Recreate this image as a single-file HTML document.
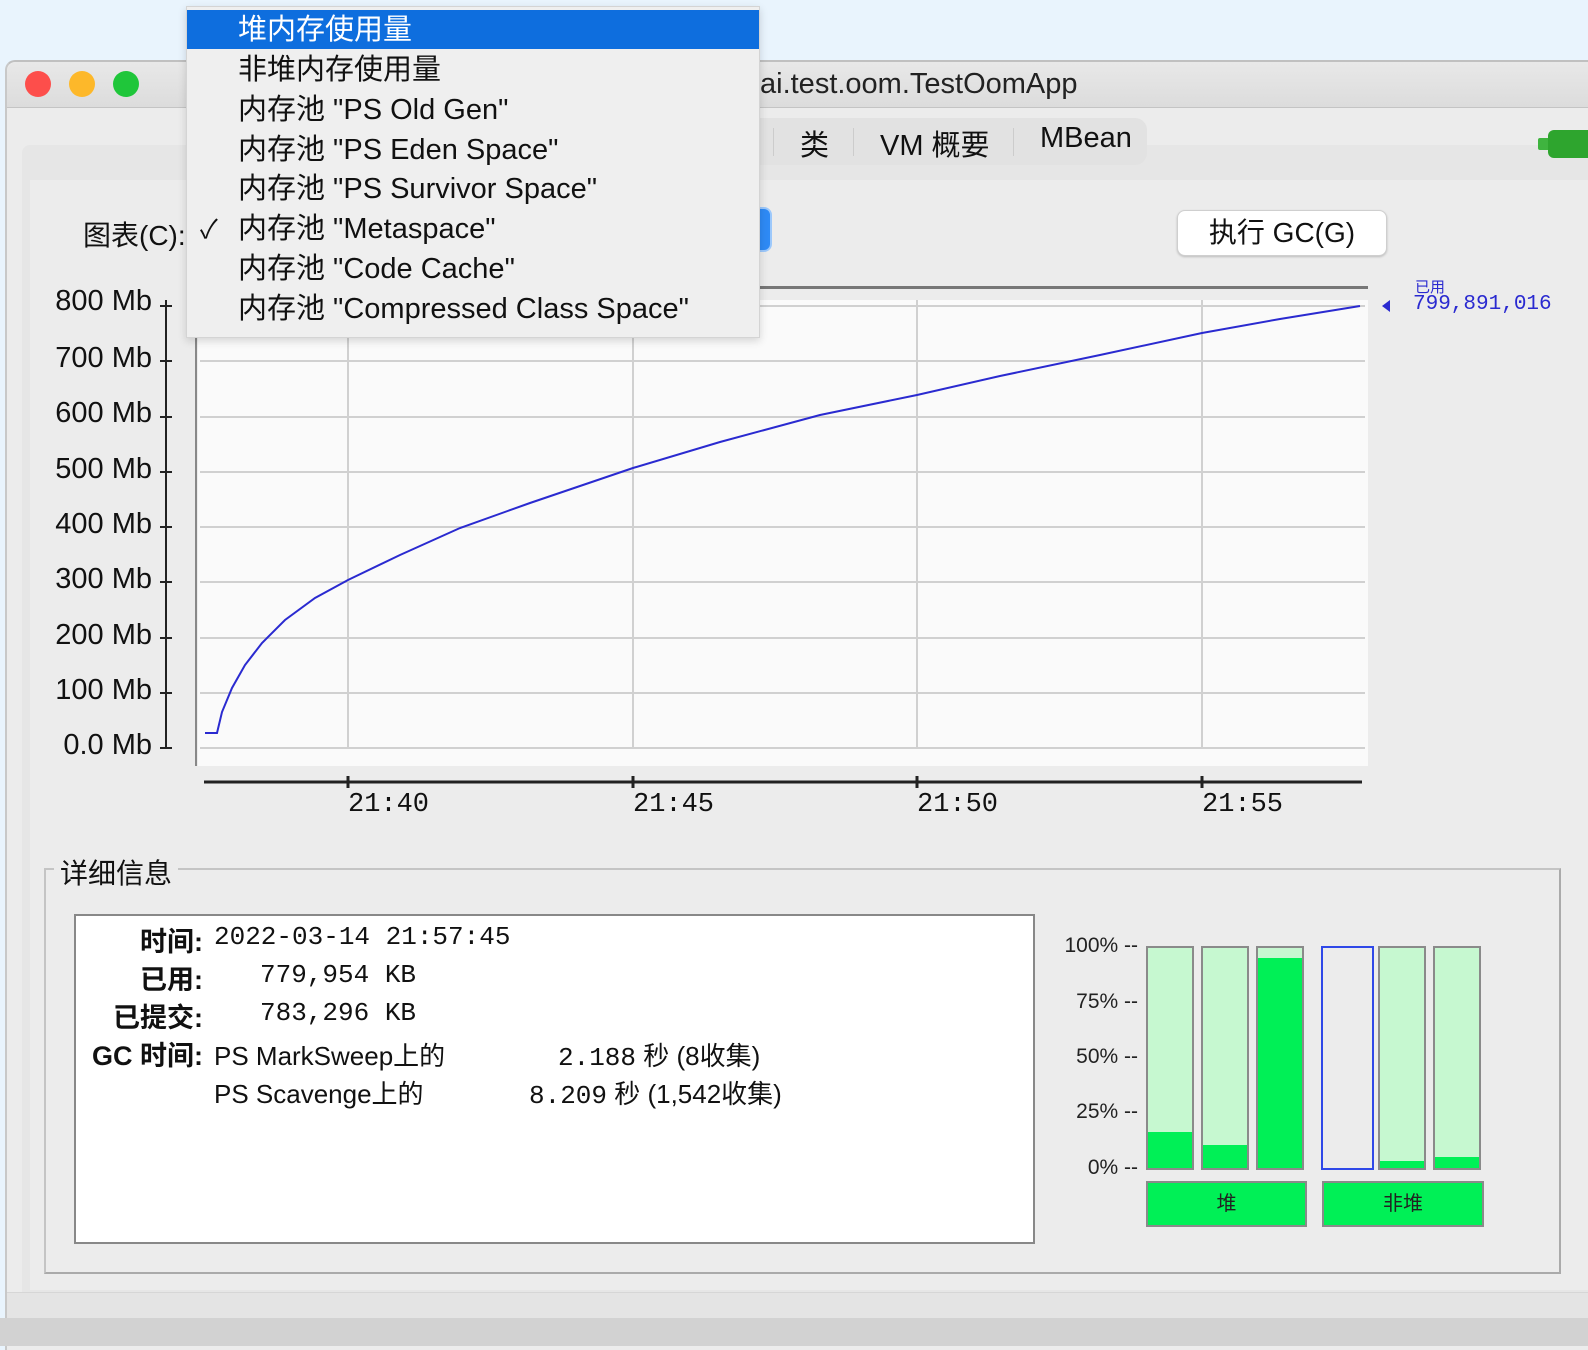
<!DOCTYPE html>
<html><head><meta charset="utf-8"><style>
*{margin:0;padding:0;box-sizing:border-box}
body{width:1588px;height:1346px;position:relative;overflow:hidden;background:#e9f4fd;font-family:"Liberation Sans","Noto Sans CJK SC",sans-serif;color:#111}
.a{position:absolute;white-space:nowrap}
.m{font-size:29px;line-height:40px;left:238px}
.yl{font-size:29px;right:1436px;text-align:right}
.xl{font-size:27px;font-family:"Liberation Mono","Noto Sans CJK SC",monospace}
.dl{font-size:27px;font-weight:bold;text-align:right;right:1385px}
.dv{font-size:26px}
.bar{position:absolute;top:946px;height:224px;width:48px;border:2px solid #8a8a8a;background:#c6f8d0}
.bar i{position:absolute;left:0;right:0;bottom:0;background:#00f056}
.pl{font-size:21px;text-align:right;right:450px;font-family:"Liberation Sans",sans-serif;color:#222}
</style></head><body>
<div class="a" style="left:5px;top:60px;width:1583px;height:1290px;background:#ececec;border-left:2px solid #c8c8c8;border-top:2px solid #c0c0c0;border-radius:10px 0 0 0"></div>
<div class="a" style="left:7px;top:62px;width:1581px;height:46px;background:linear-gradient(#e8e8e8,#dcdcdc);border-bottom:1px solid #c4c4c4;border-radius:10px 0 0 0"></div>
<div class="a" style="left:25px;top:71px;width:26px;height:26px;border-radius:50%;background:#fd4e4b"></div>
<div class="a" style="left:69px;top:71px;width:26px;height:26px;border-radius:50%;background:#fdb82a"></div>
<div class="a" style="left:113px;top:71px;width:26px;height:26px;border-radius:50%;background:#1fc63a"></div>
<div class="a" style="left:497px;top:68px;font-size:29px;color:#d8d8d8">pid: 67341 tech.pd</div>
<div class="a" style="left:760px;top:68px;font-size:29px;color:#222">ai.test.oom.TestOomApp</div>
<div class="a" style="left:22px;top:145px;width:1566px;height:1150px;background:#e6e6e6;border-radius:8px 0 0 0"></div>
<div class="a" style="left:30px;top:180px;width:1558px;height:1110px;background:#ececec"></div>
<div class="a" style="left:400px;top:118px;width:747px;height:47px;background:#e2e2e2;border-radius:12px"></div>
<div class="a" style="left:693px;top:122px;font-size:29px;color:#ccc">线程</div>
<div class="a" style="left:773px;top:128px;width:1px;height:28px;background:#ccc"></div>
<div class="a" style="left:800px;top:122px;font-size:29px">类</div>
<div class="a" style="left:853px;top:128px;width:1px;height:28px;background:#ccc"></div>
<div class="a" style="left:880px;top:122px;font-size:29px">VM 概要</div>
<div class="a" style="left:1013px;top:128px;width:1px;height:28px;background:#ccc"></div>
<div class="a" style="left:1040px;top:122px;font-size:29px">MBean</div>
<div class="a" style="left:1538px;top:138px;width:12px;height:12px;background:#3fb43f;border-radius:2px"></div>
<div class="a" style="left:1548px;top:130px;width:40px;height:28px;background:#2ea52e;border-radius:6px 0 0 6px"></div>
<div class="a" style="left:83px;top:214px;font-size:28px">图表(C):</div>
<div class="a" style="left:740px;top:207px;width:32px;height:45px;border-radius:8px;background:#2e8af5;border:2px solid #9cc8fb"></div>
<div class="a" style="left:1177px;top:210px;width:210px;height:46px;background:#fff;border:1px solid #cfcfcf;border-radius:8px;box-shadow:0 1px 2px #bbb;font-size:28px;text-align:center;line-height:44px">执行 GC(G)</div>
<div class="a" style="left:760px;top:286px;width:608px;height:3px;background:#777"></div>
<div class="a" style="left:198px;top:300px;width:1170px;height:466px;background:#fafafa"></div>
<svg class="a" style="left:0;top:0" width="1588" height="800">
<g stroke="#d0d0d0" stroke-width="2">
<line x1="200" y1="306" x2="1365" y2="306"/><line x1="200" y1="361" x2="1365" y2="361"/><line x1="200" y1="417" x2="1365" y2="417"/><line x1="200" y1="472" x2="1365" y2="472"/><line x1="200" y1="527" x2="1365" y2="527"/><line x1="200" y1="582" x2="1365" y2="582"/><line x1="200" y1="638" x2="1365" y2="638"/><line x1="200" y1="693" x2="1365" y2="693"/><line x1="200" y1="748" x2="1365" y2="748"/>
<line x1="348" y1="300" x2="348" y2="748"/><line x1="633" y1="300" x2="633" y2="748"/><line x1="917" y1="300" x2="917" y2="748"/><line x1="1202" y1="300" x2="1202" y2="748"/>
</g>
<line x1="196" y1="300" x2="196" y2="766" stroke="#888" stroke-width="2"/>
<g stroke="#222" stroke-width="2"><line x1="166" y1="300" x2="166" y2="748"/>
<line x1="160" y1="306" x2="172" y2="306"/><line x1="160" y1="361" x2="172" y2="361"/><line x1="160" y1="417" x2="172" y2="417"/><line x1="160" y1="472" x2="172" y2="472"/><line x1="160" y1="527" x2="172" y2="527"/><line x1="160" y1="582" x2="172" y2="582"/><line x1="160" y1="638" x2="172" y2="638"/><line x1="160" y1="693" x2="172" y2="693"/><line x1="160" y1="748" x2="172" y2="748"/></g>
<g stroke="#222" stroke-width="3"><line x1="204" y1="782" x2="1362" y2="782"/>
<line x1="348" y1="776" x2="348" y2="788"/><line x1="633" y1="776" x2="633" y2="788"/><line x1="917" y1="776" x2="917" y2="788"/><line x1="1202" y1="776" x2="1202" y2="788"/></g>
<path d="M205 733 L217 733 L222 712 L232 688 L245 665 L262 643 L285 620 L315 598 L348 580 L400 555 L460 528 L530 503 L633 468 L720 442 L820 415 L917 395 L1000 376 L1100 355 L1202 333 L1280 319 L1360 306" fill="none" stroke="#2a2ad0" stroke-width="2"/>
<path d="M1390 300 L1382 306 L1390 312Z" fill="#2a2ad0"/>
</svg>
<div class="a" style="left:1415px;top:276px;font-size:15px;color:#2a2ad0">已用</div>
<div class="a" style="left:1413px;top:293px;font-size:21px;color:#2a2ad0;font-family:'Liberation Mono',monospace">799,891,016</div>
<div class="a yl" style="top:285px">800 Mb</div>
<div class="a yl" style="top:342px">700 Mb</div>
<div class="a yl" style="top:397px">600 Mb</div>
<div class="a yl" style="top:453px">500 Mb</div>
<div class="a yl" style="top:508px">400 Mb</div>
<div class="a yl" style="top:563px">300 Mb</div>
<div class="a yl" style="top:619px">200 Mb</div>
<div class="a yl" style="top:674px">100 Mb</div>
<div class="a yl" style="top:729px">0.0 Mb</div>
<div class="a xl" style="left:348px;top:790px">21:40</div>
<div class="a xl" style="left:633px;top:790px">21:45</div>
<div class="a xl" style="left:917px;top:790px">21:50</div>
<div class="a xl" style="left:1202px;top:790px">21:55</div>
<div class="a" style="left:44px;top:868px;width:1517px;height:406px;border:2px solid #c4c4c4;border-right-color:#aaa;border-bottom-color:#aaa"></div>
<div class="a" style="left:54px;top:852px;font-size:28px;background:#ececec;padding:0 6px">详细信息</div>
<div class="a" style="left:74px;top:914px;width:961px;height:330px;background:#fff;border:2px solid #888"></div>
<div class="a dl" style="top:920px">时间:</div>
<div class="a dl" style="top:958px">已用:</div>
<div class="a dl" style="top:996px">已提交:</div>
<div class="a dl" style="top:1034px">GC 时间:</div>
<div class="a dv" style="left:214px;top:922px;font-family:'Liberation Mono',monospace">2022-03-14 21:57:45</div>
<div class="a dv" style="left:260px;top:960px;font-family:'Liberation Mono',monospace">779,954 KB</div>
<div class="a dv" style="left:260px;top:998px;font-family:'Liberation Mono',monospace">783,296 KB</div>
<div class="a dv" style="left:214px;top:1036px">PS MarkSweep上的</div>
<div class="a dv" style="left:214px;top:1074px">PS Scavenge上的</div>
<div class="a dv" style="left:558px;top:1036px"><span style="font-family:'Liberation Mono',monospace">2.188</span> 秒 (8收集)</div>
<div class="a dv" style="left:529px;top:1074px"><span style="font-family:'Liberation Mono',monospace">8.209</span> 秒 (1,542收集)</div>
<div class="a pl" style="top:934px">100% --</div>
<div class="a pl" style="top:990px">75% --</div>
<div class="a pl" style="top:1045px">50% --</div>
<div class="a pl" style="top:1100px">25% --</div>
<div class="a pl" style="top:1156px">0% --</div>
<div class="bar" style="left:1146px"><i style="height:36px"></i></div>
<div class="bar" style="left:1201px"><i style="height:23px"></i></div>
<div class="bar" style="left:1256px"><i style="height:210px"></i></div>
<div class="bar" style="left:1321px;width:53px;background:#ececec;border-color:#2f48e8"></div>
<div class="bar" style="left:1378px"><i style="height:7px"></i></div>
<div class="bar" style="left:1433px"><i style="height:11px"></i></div>
<div class="a" style="left:1146px;top:1181px;width:161px;height:46px;background:#00f056;border:2px solid #8a8a8a;text-align:center;font-size:20px;line-height:42px;color:#222">堆</div>
<div class="a" style="left:1322px;top:1181px;width:162px;height:46px;background:#00f056;border:2px solid #8a8a8a;text-align:center;font-size:20px;line-height:42px;color:#222">非堆</div>
<div class="a" style="left:7px;top:1292px;width:1581px;height:26px;background:#e4e4e4;border-top:1px solid #d6d6d6"></div>
<div class="a" style="left:0;top:1318px;width:1588px;height:28px;background:#d2d2d2"></div>
<div class="a" style="left:186px;top:6px;width:574px;height:332px;background:#efefef;border:1px solid #d4d4d4;box-shadow:0 3px 8px rgba(0,0,0,.15)"></div>
<div class="a" style="left:187px;top:10px;width:572px;height:39px;background:#0e6ede"></div>
<div class="a m" style="top:10px;color:#fff">堆内存使用量</div>
<div class="a m" style="top:50px">非堆内存使用量</div>
<div class="a m" style="top:90px">内存池 "PS Old Gen"</div>
<div class="a m" style="top:130px">内存池 "PS Eden Space"</div>
<div class="a m" style="top:169px">内存池 "PS Survivor Space"</div>
<div class="a" style="left:200px;top:209px;font-size:26px;line-height:40px">✓</div>
<div class="a m" style="top:209px">内存池 "Metaspace"</div>
<div class="a m" style="top:249px">内存池 "Code Cache"</div>
<div class="a m" style="top:289px">内存池 "Compressed Class Space"</div>
</body></html>
